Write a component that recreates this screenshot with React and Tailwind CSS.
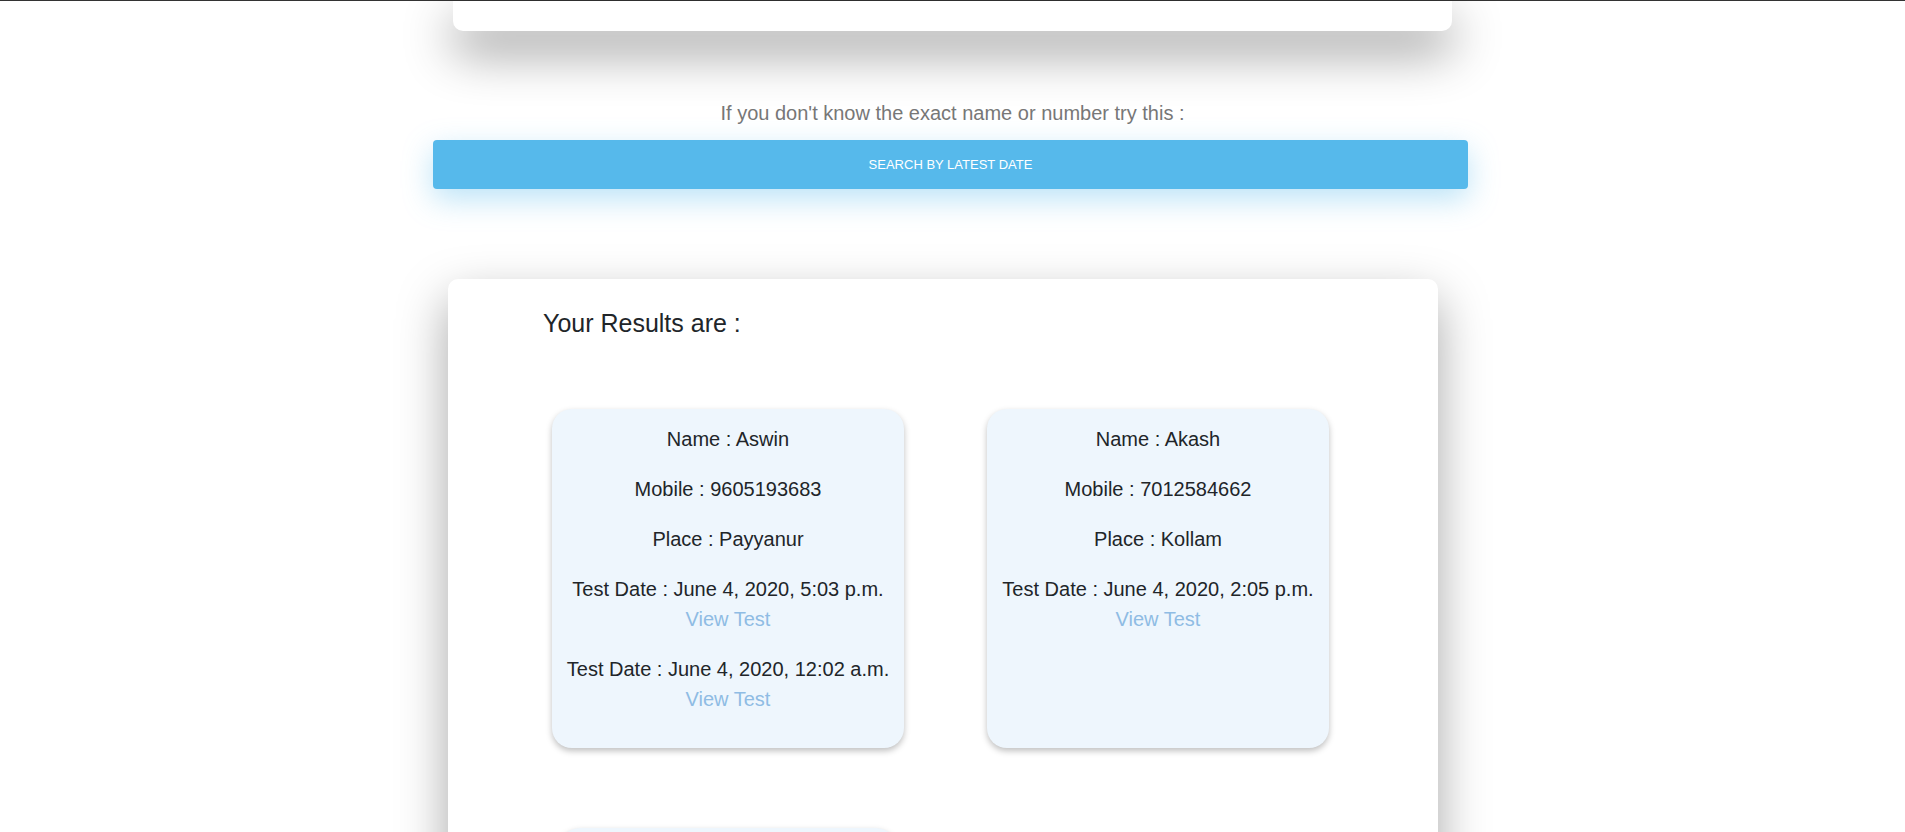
const results = [
  {
    name: "Aswin",
    mobile: "9605193683",
    place: "Payyanur",
    tests: ["June 4, 2020, 5:03 p.m.", "June 4, 2020, 12:02 a.m."],
  },
  {
    name: "Akash",
    mobile: "7012584662",
    place: "Kollam",
    tests: ["June 4, 2020, 2:05 p.m."],
  },
  {
    name: "Arjun",
    mobile: "9847562310",
    place: "Kannur",
    tests: ["May 3, 2020, 6:45 p.m."],
  },
]

function ResultCard({ person }) {
  return (
    <div className="rounded-[20px] bg-[#eef6fd] px-[15px] pt-[15px] pb-[14px] text-center text-[20px] leading-[30px] shadow-[0_3px_6px_rgba(0,0,0,0.25)]">
      <p className="mb-[20px]">Name : {person.name}</p>
      <p className="mb-[20px]">Mobile : {person.mobile}</p>
      <p className="mb-[20px]">Place : {person.place}</p>
      {person.tests.map((date) => (
        <p key={date} className="mb-[20px]">
          Test Date : {date}
          <br />
          <a href="#" className="text-[#8fbce4]">View Test</a>
        </p>
      ))}
    </div>
  )
}

export default function App() {
  return (
    <div className="min-h-screen bg-white font-['Liberation_Sans',Arial,sans-serif] text-[#212529]">
      <div className="h-px bg-[#333]" />

      {/* search form card (scrolled past) */}
      <div className="mx-auto h-[30px] w-[999px] rounded-b-[10px] bg-white shadow-[0_20px_50px_rgba(0,0,0,0.45)]" />

      <p className="mt-[67px] text-center text-[20px] leading-[30px] text-[#777]">
        If you don't know the exact name or number try this :
      </p>

      <div className="mx-auto mt-[12px] w-[1039px] pr-[4px]">
        <button className="h-[49px] w-full rounded-[4px] bg-[#56b9eb] text-[13px] uppercase text-white shadow-[0_10px_30px_rgba(86,185,235,0.4)]">
          Search by latest date
        </button>
      </div>

      <div className="mx-auto mt-[90px] w-[1039px] pl-[15px] pr-[34px]">
        <div className="rounded-[10px] bg-white px-[65px] pt-[29px] pb-[60px] shadow-[0_20px_50px_rgba(0,0,0,0.35)]">
          <h2 className="ml-[30px] text-[25px] leading-[30px]">Your Results are :</h2>
          <div className="mt-[71px] grid grid-cols-2 justify-items-center gap-y-[80px]">
            {results.map((person) => (
              <ResultCard key={person.mobile} person={person} />
            ))}
          </div>
        </div>
      </div>
    </div>
  )
}
